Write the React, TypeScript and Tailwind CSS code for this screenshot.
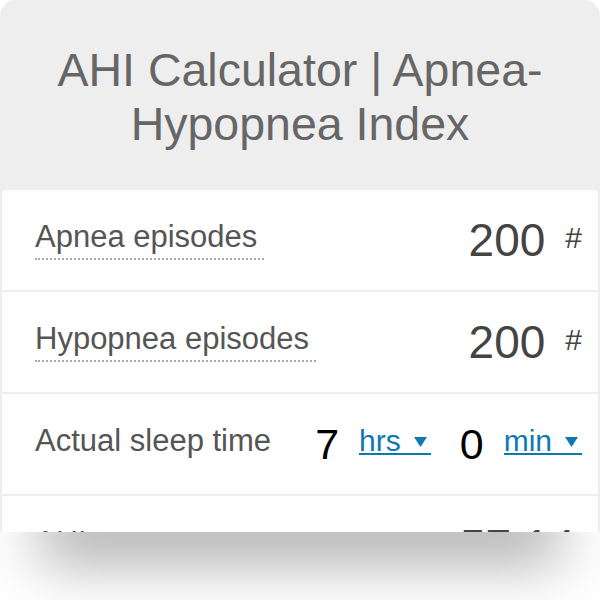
export default function App() {
  return (
    <div className="w-[600px] h-[600px] bg-white overflow-hidden font-['Liberation_Sans',Arial,sans-serif]">
      {/* calculator box, cut off at the bottom */}
      <div className="h-[532px] overflow-hidden rounded-t-[16px] bg-[#eeeeee] px-[2px] flex flex-col">
        <header className="h-[190px] shrink-0 pt-[43px] text-center text-[46.5px] leading-[54px] text-[#666666]">
          AHI Calculator | Apnea-
          <br />
          Hypopnea Index
        </header>

        <div className="flex-1 bg-white rounded-t-[4px]">
          <Row label="Apnea episodes" value="200" unit="#" />
          <Row label="Hypopnea episodes" value="200" unit="#" />

          <div className="h-[102px] border-b-2 border-[#eeeeee] flex items-center pl-[33px] pr-[16px]">
            <Label text="Actual sleep time" plain />
            <div className="ml-auto flex items-center">
              <span className="text-[43px] leading-[44px] text-black">7</span>
              <Unit text="hrs" className="ml-[20px]" />
              <span className="ml-[29px] text-[43px] leading-[44px] text-black">0</span>
              <Unit text="min" className="ml-[20px]" />
            </div>
          </div>

          <Row label="AHI" value="57.14" unit="" />
        </div>
      </div>

      {/* shadow under the cut */}
      <div className="h-[68px] overflow-hidden bg-white">
        <div className="mx-[70px] h-0 shadow-[0_0_60px_30px_rgba(0,0,0,0.34)]" />
      </div>
    </div>
  );
}

function Label({ text, plain }: { text: string; plain?: boolean }) {
  return (
    <span
      className={
        "inline-block text-[31px] leading-[34px] text-[#555555] pb-[4px] pr-[7px] border-b-2 border-dotted " +
        (plain ? "border-transparent" : "border-[#a8a8a8]")
      }
    >
      {text}
    </span>
  );
}

function Row({ label, value, unit }: { label: string; value: string; unit: string }) {
  return (
    <div className="h-[102px] border-b-2 border-[#eeeeee] flex items-center pl-[33px] pr-[16px]">
      <Label text={label} />
      <div className="ml-auto flex items-center">
        <span className="text-[46px] leading-[46px] text-[#444444]">{value}</span>
        {unit ? (
          <span className="ml-[20px] mb-[5px] text-[30px] leading-[30px] text-[#444444]">{unit}</span>
        ) : (
          <span className="w-[7px]" />
        )}
      </div>
    </div>
  );
}

function Unit({ text, className }: { text: string; className: string }) {
  return (
    <span className={"mb-[6px] inline-flex items-end pr-[4px] border-b-2 border-[#0d79b3] text-[#0d79b3] " + className}>
      <span className="text-[30px] leading-[25px]">{text}</span>
      <svg width="13" height="10" viewBox="0 0 13 10" className="ml-[13px] mb-[6px]">
        <path d="M0 0H13L6.5 10Z" fill="#0d79b3" />
      </svg>
    </span>
  );
}
